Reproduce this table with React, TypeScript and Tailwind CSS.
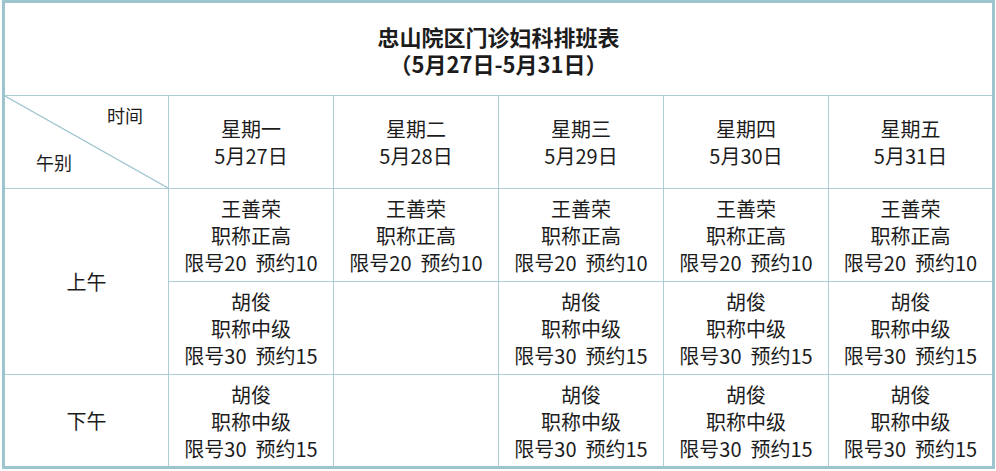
import React from 'react';

const days = [
    {week: '星期一', date: '5月27日'},
    {week: '星期二', date: '5月28日'},
    {week: '星期三', date: '5月29日'},
    {week: '星期四', date: '5月30日'},
    {week: '星期五', date: '5月31日'},
];

type Shift = { name: string, title: string, limit: number, booked: number } | null

const wang: Shift = {name: '王善荣', title: '职称正高', limit: 20, booked: 10}
const hu: Shift = {name: '胡俊', title: '职称中级', limit: 30, booked: 15}

const amFirst: Shift[] = [wang, wang, wang, wang, wang]
const amSecond: Shift[] = [hu, null, hu, hu, hu]
const pm: Shift[] = [hu, null, hu, hu, hu]

function ShiftCell({shift}: { shift: Shift }) {
    return (
        <div className="bg-white flex flex-col items-center justify-center text-[20px] leading-[27px] pt-[1px]">
            {shift && (
                <>
                    <p>{shift.name}</p>
                    <p>{shift.title}</p>
                    <p className="whitespace-pre">{`限号${shift.limit}  预约${shift.booked}`}</p>
                </>
            )}
        </div>
    )
}

function App() {
    return (
        <div className="w-[996px] h-[471px] bg-white text-[#1c1c1c]"
             style={{fontFamily: '"Noto Sans CJK SC", "Noto Sans", sans-serif'}}>
            <div className="ml-[2px] w-[993px] h-[469px] border-[3px] border-[#9ec4cd] bg-[#aecdd4] grid grid-cols-[163px_164px_164px_164px_164px_163px] grid-rows-[92px_92px_92px_92px_91px] gap-px">
                {/* title */}
                <div className="col-span-6 bg-white flex flex-col items-center justify-center font-bold text-[22px] leading-[27px] pt-[2px]">
                    <p>忠山院区门诊妇科排班表</p>
                    <p>（5月27日-5月31日）</p>
                </div>

                {/* corner with diagonal */}
                <div className="relative bg-white text-[18px]">
                    <svg className="absolute inset-0" width="163" height="92" viewBox="0 0 163 92">
                        <line x1="0" y1="0" x2="163" y2="92" stroke="#9ec4cd" strokeWidth="1.2"/>
                    </svg>
                    <span className="absolute left-[102px] top-[7px] leading-[24px]">时间</span>
                    <span className="absolute left-[31px] top-[54px] leading-[24px]">午别</span>
                </div>

                {days.map(d => (
                    <div key={d.week}
                         className="bg-white flex flex-col items-center justify-center text-[20px] leading-[27px]">
                        <p>{d.week}</p>
                        <p>{d.date}</p>
                    </div>
                ))}

                <div className="row-span-2 bg-white flex items-center justify-center text-[20px]">上午</div>
                {amFirst.map((s, i) => <ShiftCell key={'a' + i} shift={s}/>)}
                {amSecond.map((s, i) => <ShiftCell key={'b' + i} shift={s}/>)}

                <div className="bg-white flex items-center justify-center text-[20px]">下午</div>
                {pm.map((s, i) => <ShiftCell key={'c' + i} shift={s}/>)}
            </div>
        </div>
    );
}

export default App;
